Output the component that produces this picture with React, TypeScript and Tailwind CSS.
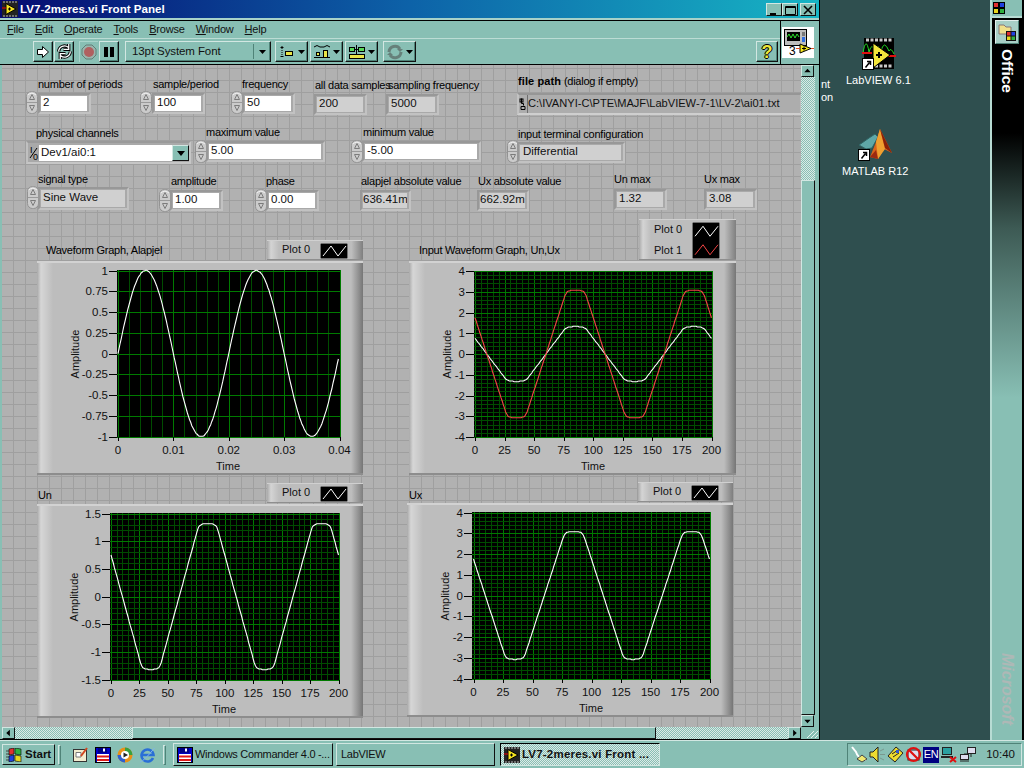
import React from "react";

type N = number;
const box = (x: N, y: N, w: N, h: N) => ({ left: x - 2, top: y - 64, width: w, height: h });

function Spin({ x, y, h = 23 }: { x: N; y: N; h?: N }) {
  return (
    <svg className="absolute" style={box(x, y, 12, h)} viewBox={`0 0 12 ${h}`}>
      <rect x="0.5" y="0.5" width="11" height={h - 1} rx="5" fill="#cbcbcb" stroke="#929292" />
      <path d="M1.5 4Q6 0.5 10 4" stroke="#efefef" fill="none" />
      <line x1="1" x2="11" y1={h / 2} y2={h / 2} stroke="#9a9a9a" />
      <path d={`M6 ${h / 2 - 8}L3.5 ${h / 2 - 3}H8.5Z`} fill="none" stroke="#7c7c7c" />
      <path d={`M6 ${h / 2 + 8}L3.5 ${h / 2 + 3}H8.5Z`} fill="none" stroke="#7c7c7c" />
    </svg>
  );
}

function Label({ x, y, children }: { x: N; y: N; children: React.ReactNode }) {
  return (
    <span className="absolute whitespace-nowrap text-[11px] leading-[12px] tracking-[-0.25px] text-black" style={{ left: x - 2, top: y - 71 }}>
      {children}
    </span>
  );
}

function Field({ x, y, w, h = 15, value, dim, px = 2 }: { x: N; y: N; w: N; h?: N; value: string; dim?: boolean; px?: N }) {
  return (
    <>
      <div className="absolute border-2 border-t-[#989898] border-l-[#989898] border-r-[#c2c2c2] border-b-[#c2c2c2] bg-[#a9a9a9]" style={box(x - 3, y - 3, w + 7, h + 6)} />
      <div
        className={`absolute flex items-center overflow-hidden whitespace-nowrap pb-[1px] text-[11.5px] text-[#111] ${dim ? "bg-[#d0d0d0]" : "bg-white"}`}
        style={{ ...box(x, y, w, h), paddingLeft: px }}
      >
        {value}
      </div>
    </>
  );
}

function Legend({ x, y, w, h, plots }: { x: N; y: N; w: N; h: N; plots: { name: string; color: string }[] }) {
  const rh = (h - 4) / plots.length;
  return (
    <div className="absolute border-t border-t-[#d0d0d0] border-b border-b-[#8e8e8e] bg-[linear-gradient(90deg,#a9a9a9_0,#d4d4d4_4px,#bdbdbd_12px,#bdbdbd_88%,#7f7f7f_100%)]" style={box(x, y, w, h)}>
      {plots.map((p, i) => (
        <span key={p.name} className="absolute whitespace-nowrap text-[11px] leading-[12px] text-[#111]" style={{ left: 15, top: rh * i + rh / 2 - 6 + i * 2 }}>
          {p.name}
        </span>
      ))}
      <svg className="absolute left-[53px] top-[2px]" width="28" height={h - 4}>
        <rect width="28" height={h - 4} fill="#000" stroke="#e0e0e0" />
        {plots.map((p, i) => {
          const m = rh * i + rh / 2;
          return <polyline key={p.name} points={`3,${m + 5} 11,${m - 5} 18,${m + 5} 26,${m - 5}`} fill="none" stroke={p.color} />;
        })}
      </svg>
    </div>
  );
}

function softClip(tri: N, limit: N) {
  const a = Math.abs(tri) / limit;
  const v = a < 0.9 ? a : 0.9 + 0.1 * (1 - Math.exp(-(a - 0.9) / 0.1));
  return Math.sign(tri) * v * limit;
}
function clipped(t: N, limit: N) {
  const p = ((t - 35) % 100 + 100) % 100;
  const tri = p < 50 ? -1 + p / 25 : 1 - (p - 50) / 25;
  return softClip(tri * limit * 1.42, limit);
}

type Series = { color: string; f: (i: N) => N };
type G = {
  frame: [N, N, N, N];
  plot: [N, N, N, N];
  xr: [N, N];
  yr: [N, N];
  xl: string[];
  yl: string[];
  xMinor: N;
  yMinor: N;
  ampX: N;
  ampY: N;
  timeX: N;
  timeY: N;
  series: Series[];
  end: N;
};

function Graph({ g }: { g: G }) {
  const [fx, fy, fw, fh] = g.frame;
  const [l, t, r, b] = g.plot;
  const xp = (i: N, n: N) => g.xr[0] + ((g.xr[1] - g.xr[0]) * i) / n;
  const yp = (i: N, n: N) => g.yr[0] + ((g.yr[1] - g.yr[0]) * i) / n;
  const xn = g.xl.length - 1;
  const yn = g.yl.length - 1;
  const lo = parseFloat(g.yl[0]);
  const hi = parseFloat(g.yl[yn]);
  return (
    <div
      className="absolute border-t-2 border-t-[#d2d2d2] border-b-2 border-b-[#8d8d8d] bg-[linear-gradient(90deg,#a9a9a9_0,#d6d6d6_4px,#cacaca_10px,#bdbdbd_16px,#bdbdbd_calc(100%-12px),#767676_100%)]"
      style={box(fx, fy, fw, fh)}
    >
      <svg className="absolute" style={{ left: 0, top: -2 }} width={fw} height={fh} viewBox={`${fx} ${fy} ${fw} ${fh}`}>
        <rect x={l} y={t} width={r - l} height={b - t} fill="#000" />
        <g shapeRendering="crispEdges">
          {Array.from({ length: xn * g.xMinor + 1 }, (_, i) => (
            <line key={i} x1={Math.round(xp(i, xn * g.xMinor)) + 0.5} x2={Math.round(xp(i, xn * g.xMinor)) + 0.5} y1={t} y2={b} stroke={i % g.xMinor ? "#004c00" : "#007a00"} />
          ))}
          {g.yMinor > 1 &&
            Array.from({ length: yn * g.yMinor + 1 }, (_, i) =>
              i % g.yMinor ? <line key={i} x1={l} x2={r} y1={Math.round(yp(i, yn * g.yMinor)) + 0.5} y2={Math.round(yp(i, yn * g.yMinor)) + 0.5} stroke="#004c00" /> : null,
            )}
          {g.yl.map((_, i) => (
            <line key={i} x1={l} x2={r} y1={Math.round(yp(i, yn)) + 0.5} y2={Math.round(yp(i, yn)) + 0.5} stroke="#007a00" />
          ))}
          {g.yl.map((_, i) => (
            <line key={"t" + i} x1={l - 8} x2={l} y1={Math.round(yp(i, yn)) + 0.5} y2={Math.round(yp(i, yn)) + 0.5} stroke="#000" />
          ))}
          {g.xl.map((_, i) => (
            <line key={"u" + i} x1={Math.round(xp(i, xn)) + 0.5} x2={Math.round(xp(i, xn)) + 0.5} y1={b} y2={b + 4} stroke="#000" />
          ))}
        </g>
        {g.series.map((s) => (
          <polyline
            key={s.color}
            fill="none"
            stroke={s.color}
            strokeWidth="1.1"
            points={Array.from({ length: 201 }, (_, i) => {
              const x = g.xr[0] + ((g.xr[1] - g.xr[0]) * i * g.end) / 200;
              const v = s.f(i * g.end);
              const y = g.yr[0] + ((g.yr[1] - g.yr[0]) * (v - hi)) / (lo - hi);
              return `${x.toFixed(1)},${(Math.round(y * 1.5) / 1.5).toFixed(1)}`;
            }).join(" ")}
          />
        ))}
        <g fontSize="11.5" fill="#111">
          {g.yl.map((s, i) => (
            <text key={s} x={l - 9} y={yp(yn - i, yn) + 4} textAnchor="end">
              {s}
            </text>
          ))}
          {g.xl.map((s, i) => (
            <text key={s} x={xp(i, xn)} y={b + 17} textAnchor="middle">
              {s}
            </text>
          ))}
          <text x={g.timeX} y={g.timeY + 4} textAnchor="middle" fontSize="11">
            Time
          </text>
          <text transform={`translate(${g.ampX + 4} ${g.ampY}) rotate(-90)`} textAnchor="middle" fontSize="11">
            Amplitude
          </text>
        </g>
      </svg>
    </div>
  );
}

const un: Series = { color: "#fff", f: (i) => clipped(i, 1.32) };
const ux: Series = { color: "#fff", f: (i) => clipped(i, 3.08) };
const amps = ["-4", "-3", "-2", "-1", "0", "1", "2", "3", "4"];
const times = ["0", "25", "50", "75", "100", "125", "150", "175", "200"];

const graphs: G[] = [
  {
    frame: [37, 260, 326, 214],
    plot: [117, 269, 340, 436],
    xr: [118, 339.5],
    yr: [269.5, 435.5],
    xl: ["0", "0.01", "0.02", "0.03", "0.04"],
    yl: ["-1", "-0.75", "-0.5", "-0.25", "0", "0.25", "0.5", "0.75", "1"],
    xMinor: 5,
    yMinor: 1,
    ampX: 75,
    ampY: 353,
    timeX: 228,
    timeY: 465,
    series: [{ color: "#fff", f: (i) => Math.sin((2 * Math.PI * i) / 100) }],
    end: 0.995,
  },
  {
    frame: [409, 260, 327, 214],
    plot: [474, 270, 712, 436],
    xr: [475, 711.5],
    yr: [270, 436],
    xl: times,
    yl: amps,
    xMinor: 5,
    yMinor: 5,
    ampX: 447,
    ampY: 353,
    timeX: 593,
    timeY: 465,
    series: [{ color: "#fff", f: un.f }, { color: "#f24545", f: ux.f }],
    end: 1,
  },
  {
    frame: [37, 503, 326, 214],
    plot: [110, 512, 339, 679],
    xr: [111, 338.5],
    yr: [512.5, 678.5],
    xl: times,
    yl: ["-1.5", "-1", "-0.5", "0", "0.5", "1", "1.5"],
    xMinor: 5,
    yMinor: 5,
    ampX: 74,
    ampY: 596,
    timeX: 224,
    timeY: 708,
    series: [un],
    end: 1,
  },
  {
    frame: [407, 502, 326, 214],
    plot: [472, 511, 710, 678],
    xr: [473.5, 709.5],
    yr: [511.5, 677.5],
    xl: times,
    yl: amps,
    xMinor: 5,
    yMinor: 5,
    ampX: 445,
    ampY: 595,
    timeX: 591,
    timeY: 707,
    series: [ux],
    end: 1,
  },
];

function ToolBtn({ w = 20, className = "", children }: { w?: N; className?: string; children?: React.ReactNode }) {
  return (
    <div
      className={`flex h-[21px] shrink-0 items-center justify-center border border-t-[#d2e7e2] border-l-[#d2e7e2] border-r-[#111] border-b-[#111] bg-[#88bfb4] shadow-[inset_-1px_-1px_0_#4f8378] ${className}`}
      style={{ width: w }}
    >
      {children}
    </div>
  );
}

const Caret = () => (
  <svg width="7" height="4" className="ml-[2px] shrink-0">
    <path d="M0 0H7L3.500 4Z" fill="#000" />
  </svg>
);

function LvIcon({ size = 16 }: { size?: N }) {
  return (
    <svg width={size} height={size} viewBox="0 0 16 16" className="shrink-0">
      <rect width="16" height="16" fill="#222" />
      <path d="M1 1h14M1 15h14" stroke="#bbb" strokeDasharray="2 1" />
      <path d="M4 2.500L14 8 4 13.500Z" fill="#f4e320" stroke="#000" />
      <path d="M0 7h4" stroke="#e00" />
      <path d="M6 8h3M7.500 6.500v3" stroke="#000" />
    </svg>
  );
}

function ScrollBtn({ dir, className = "" }: { dir: "up" | "down" | "left" | "right"; className?: string }) {
  const d = { up: "M2 7H9L5.500 3Z", down: "M2 4H9L5.500 8Z", left: "M7 2V9L3 5.500Z", right: "M4 2V9L8 5.500Z" }[dir];
  return (
    <div className={`flex h-[12px] w-[13px] shrink-0 items-center justify-center border border-t-[#d2e7e2] border-l-[#d2e7e2] border-r-[#111] border-b-[#111] bg-[#88bfb4] ${className}`}>
      <svg width="11" height="10" viewBox="0 0 11 11">
        <path d={d} fill="#000" />
      </svg>
    </div>
  );
}

const dither = "bg-[repeating-conic-gradient(#dce9e6_0_25%,#88bfb4_0_50%)] bg-[size:2px_2px]";

const Floppy = () => (
  <svg width="16" height="16" viewBox="0 0 16 16" className="shrink-0">
    <rect x="0.500" y="0.500" width="15" height="15" fill="#0000c8" stroke="#000" />
    <rect x="3" y="1" width="9" height="5" fill="#000088" />
    <rect x="8" y="1.500" width="2" height="3" fill="#fff" />
    <rect x="2" y="7" width="12" height="8" fill="#fff" />
    <rect x="2" y="8.500" width="12" height="2" fill="#e01818" />
    <rect x="2" y="12" width="12" height="2" fill="#e01818" />
  </svg>
);

const ShortcutArrow = ({ x, y }: { x: N; y: N }) => (
  <g transform={`translate(${x} ${y})`}>
    <rect width="11" height="11" fill="#fff" stroke="#000" />
    <path d="M3 9L7 4M4.500 3H8V6.500" stroke="#000" strokeWidth="1.500" fill="none" />
  </g>
);

function TaskBtn({ w, active, icon, children, ml }: { w: N; active?: boolean; icon?: React.ReactNode; children: React.ReactNode; ml: N }) {
  return (
    <div
      className={`flex h-[23px] shrink-0 items-center gap-[2px] overflow-hidden whitespace-nowrap border pl-[3px] text-[#111] ${
        active
          ? `border-t-black border-l-black border-r-[#d2e7e2] border-b-[#d2e7e2] text-[11.5px] font-bold tracking-[0.2px] ${dither}`
          : "border-t-[#d2e7e2] border-l-[#d2e7e2] border-r-[#111] border-b-[#111] text-[11px] tracking-[-0.3px]"
      }`}
      style={{ width: w, marginLeft: ml }}
    >
      {icon}
      <span>{children}</span>
    </div>
  );
}

const Grip = () => (
  <div className="mx-[3px] h-[20px] w-[3px] shrink-0 border border-t-[#d2e7e2] border-l-[#d2e7e2] border-r-[#4f8378] border-b-[#4f8378]" />
);

export default function App() {
  return (
    <div className="flex h-[768px] w-[1024px] flex-col overflow-hidden bg-[#88bfb4] font-['Liberation_Sans',Arial,sans-serif] text-[11px] text-black">
      <div className="flex h-[740px] shrink-0">
        {/* LabVIEW window */}
        <div className="flex h-full w-[820px] shrink-0 flex-col border-r border-r-black bg-[#88bfb4]">
          <div className="flex h-[18px] shrink-0 items-center bg-[linear-gradient(90deg,#050a70,#0d62a8_50%,#17b4c4)] pl-[2px] pr-[3px]">
            <LvIcon />
            <span className="ml-[2px] whitespace-nowrap text-[11.6px] font-bold text-white">LV7-2meres.vi Front Panel</span>
            <div className="ml-auto flex">
              {[
                <rect key="a" x="3" y="9" width="6" height="2" fill="#000" />,
                <path key="b" d="M2.500 2.500H12.500V10.500H2.500ZM2 3.500H13" fill="none" stroke="#000" />,
                <path key="c" d="M3 2L11 10M11 2L3 10" stroke="#000" strokeWidth="1.600" />,
              ].map((ic, i) => (
                <div key={i} className={`h-[13px] w-[16px] border border-t-[#d2e7e2] border-l-[#d2e7e2] border-r-[#111] border-b-[#111] bg-[#88bfb4] ${i === 2 ? "ml-[2px]" : ""}`}>
                  <svg width="14" height="11">{ic}</svg>
                </div>
              ))}
            </div>
          </div>
          <div className="h-[2px] shrink-0 bg-[#a7d2c9]" />
          <div className="h-px shrink-0 bg-black" />
          <div className="flex h-[43px] shrink-0">
            <div className="flex min-w-0 flex-1 flex-col">
              <div className="flex h-[17px] shrink-0 items-center gap-[11px] pl-[7px] text-[11px] tracking-[-0.2px] text-[#111]">
                {[
                  ["F", "ile"],
                  ["E", "dit"],
                  ["O", "perate"],
                  ["T", "ools"],
                  ["B", "rowse"],
                  ["W", "indow"],
                  ["H", "elp"],
                ].map(([a, b]) => (
                  <span key={a}>
                    <span className="underline">{a}</span>
                    {b}
                  </span>
                ))}
              </div>
              <div className="h-px shrink-0 bg-[#bcdcd5]" />
              <div className="flex flex-1 items-center pl-[33px] pr-[2px]">
                <ToolBtn>
                  <svg width="14" height="14" viewBox="0 0 14 14">
                    <path d="M1.500 4.500H6.500V1.500L12.500 7 6.500 12.500V9.500H1.500Z" fill="#fff" stroke="#000" />
                  </svg>
                </ToolBtn>
                <ToolBtn className="ml-px">
                  <svg width="17" height="17" viewBox="0 0 16 16">
                    <path d="M2.500 8A5.500 5.500 0 0 1 11.500 4M12 1V6H7" fill="none" stroke="#000" strokeWidth="3" />
                    <path d="M2.500 8A5.500 5.500 0 0 1 11.500 4M12 1V6H7" fill="none" stroke="#fff" strokeWidth="1.200" />
                    <path d="M13.500 8A5.500 5.500 0 0 1 4.500 12M4 15V10H9" fill="none" stroke="#000" strokeWidth="3" />
                    <path d="M13.500 8A5.500 5.500 0 0 1 4.500 12M4 15V10H9" fill="none" stroke="#fff" strokeWidth="1.200" />
                  </svg>
                </ToolBtn>
                <div className="ml-[5px] flex h-[21px] w-[19px] shrink-0 items-center justify-center bg-[#88bfb4] shadow-[inset_1px_1px_0_#a9d4cb]">
                  <svg width="16" height="16" viewBox="0 0 16 16">
                    <path d="M5 1H11L15 5V11L11 15H5L1 11V5Z" fill="#9ab5ad" stroke="#5f7f78" />
                    <circle cx="8" cy="8" r="5" fill="#b06060" />
                  </svg>
                </div>
                <ToolBtn className="ml-px">
                  <svg width="12" height="12">
                    <rect x="1" y="1" width="4" height="10" fill="#000" />
                    <rect x="7" y="1" width="4" height="10" fill="#000" />
                  </svg>
                </ToolBtn>
                <ToolBtn w={146} className="ml-[6px] !justify-start pl-[6px]">
                  <span className="whitespace-nowrap text-[11.5px] tracking-[-0.1px] text-[#111]">13pt System Font</span>
                  <span className="ml-auto mr-[2px] flex h-[15px] items-center border-l border-l-[#4f8378] pl-[3px] pr-[2px]">
                    <Caret />
                  </span>
                </ToolBtn>
                <ToolBtn w={33} className="ml-[4px]">
                  <svg width="18" height="16" viewBox="0 0 18 16">
                    <path d="M2.500 3.500h3M4 2v3M2.500 12.500h3" stroke="#000" />
                    <rect x="7.500" y="7.500" width="7" height="4" fill="#e9e648" stroke="#000" />
                    <path d="M4 6v5" stroke="#000" strokeDasharray="1 1" />
                  </svg>
                  <Caret />
                </ToolBtn>
                <ToolBtn w={33} className="ml-[2px]">
                  <svg width="18" height="16" viewBox="0 0 18 16">
                    <path d="M1 3Q4 0 7 3H11Q14 0 17 3" stroke="#000" fill="none" />
                    <rect x="3.500" y="8.500" width="3" height="3" fill="#e9e648" stroke="#000" />
                    <rect x="10.500" y="6.500" width="4" height="7" fill="#e9e648" stroke="#000" />
                    <path d="M1 13.500H17" stroke="#000" />
                  </svg>
                  <Caret />
                </ToolBtn>
                <ToolBtn w={33} className="ml-[2px]">
                  <svg width="18" height="16" viewBox="0 0 18 16">
                    <rect x="1.500" y="3.500" width="5" height="4" fill="#58d858" stroke="#000" />
                    <rect x="10.500" y="3.500" width="6" height="4" fill="#58d858" stroke="#000" />
                    <rect x="1.500" y="10.500" width="15" height="4" fill="#e9e648" stroke="#000" />
                    <path d="M8.500 1V10M6 5.500H11" stroke="#000" />
                  </svg>
                  <Caret />
                </ToolBtn>
                <ToolBtn w={33} className="ml-[5px]">
                  <svg width="18" height="16" viewBox="0 0 18 16">
                    <path d="M3 8A6 6 0 0 1 14 5M15 8A6 6 0 0 1 4 11" stroke="#66807a" strokeWidth="3" fill="none" />
                    <path d="M11 5H17L14 8ZM1 11H7L4 8Z" fill="#66807a" />
                  </svg>
                  <Caret />
                </ToolBtn>
                <ToolBtn w={22} className="ml-auto">
                  <span className="text-[18px] font-bold leading-[18px] text-[#eee93a] [text-shadow:1px_0_0_#000,-1px_0_0_#000,0_1px_0_#000,0_-1px_0_#000]">?</span>
                </ToolBtn>
              </div>
            </div>
            <div className="flex w-[39px] shrink-0 border-l border-l-black pl-[1px] pt-[6px]">
              <div className="relative h-[31px] w-[32px] bg-white">
                <svg width="32" height="31" viewBox="0 0 32 31">
                  <rect x="2.500" y="2.500" width="22" height="16" fill="#bdbdbd" stroke="#000" />
                  <rect x="5" y="5" width="13" height="9" fill="#000" />
                  <path d="M5 10L7 7 9 11 11 7 13 11 15 7 17 10" stroke="#2ce02c" fill="none" />
                  <rect x="20" y="5" width="3" height="4" fill="#777" />
                  <rect x="20" y="10" width="3" height="5" fill="#2f6de0" />
                  <path d="M18 17L29 21.500 18 26Z" fill="#f6e61c" stroke="#000" />
                  <path d="M14 21.500H18M29 21.500H32" stroke="#e04a20" />
                  <path d="M20 21.500h4M22 19.500v4" stroke="#000" />
                </svg>
                <span className="absolute left-[7px] top-[18px] text-[12px] leading-[13px] text-black">3</span>
              </div>
            </div>
          </div>
          <div className="h-px shrink-0 bg-black" />
          {/* Panel + vertical scrollbar */}
          <div className="flex min-h-0 flex-1">
            <div className="w-[2px] shrink-0" />
            <div className="relative min-w-0 flex-1 overflow-hidden bg-[#b1b1b1] bg-[linear-gradient(#9f9f9f_1px,transparent_1px),linear-gradient(90deg,#9f9f9f_1px,transparent_1px)] bg-[position:11px_3px] bg-[size:12px_12px]">
              <Label x={38} y={84}>number of periods</Label>
              <Spin x={26} y={90} />
              <Field x={41} y={95} w={46} value="2" />
              <Label x={153} y={84}>sample/period</Label>
              <Spin x={140} y={90} />
              <Field x={155} y={95} w={46} value="100" />
              <Label x={242} y={84}>frequency</Label>
              <Spin x={231} y={90} />
              <Field x={245} y={95} w={46} value="50" />
              <Label x={315} y={85}>all data samples</Label>
              <Field x={317} y={96} w={46} value="200" dim />
              <Label x={388} y={85}>sampling frequency</Label>
              <Field x={389} y={96} w={46} value="5000" dim />
              <Label x={518} y={81}>
                <b className="tracking-[0.1px]">file path</b> (dialog if empty)
              </Label>
              <div className="absolute flex items-center border-2 border-t-[#969696] border-l-[#c2c2c2] border-r-[#bdbdbd] border-b-[#cfcfcf] bg-[#adadad]" style={box(517, 92, 285, 22)}>
                <svg width="7" height="14" className="shrink-0" viewBox="0 0 7 14">
                  <path d="M2.500 1.500v5h2v2M2 9.500H6V12.500H2Z" stroke="#000" fill="none" />
                  <rect x="1" y="2" width="3" height="3" fill="none" stroke="#000" />
                </svg>
                <span className="ml-[1px] flex h-[18px] flex-1 items-center whitespace-nowrap border-l border-l-[#6e6e6e] pb-[1px] text-[11.1px] text-[#111]">C:\IVANYI-C\PTE\MAJF\LabVIEW-7-1\LV-2\ai01.txt</span>
              </div>

              <Label x={36} y={133}>physical channels</Label>
              <div className="absolute border-2 border-t-[#9a9a9a] border-l-[#c0c0c0] border-r-[#c6c6c6] border-b-[#c6c6c6] bg-[#a9a9a9]" style={box(26, 140, 165, 23)} />
              <span className="absolute text-[9px] leading-[9px]" style={{ left: 28, top: 81 }}>
                I
              </span>
              <span className="absolute text-[9px] leading-[9px]" style={{ left: 31, top: 88 }}>
                0
              </span>
              <svg className="absolute" style={box(29, 146, 10, 12)} viewBox="0 0 10 12">
                <path d="M1 11L8 1" stroke="#000" />
              </svg>
              <div className="absolute flex items-center whitespace-nowrap bg-white pb-[1px] pl-[2px] text-[11.5px] text-[#111]" style={box(39, 144, 133, 16)}>
                Dev1/ai0:1
              </div>
              <div className="absolute flex items-center justify-center border border-t-[#d2e7e2] border-l-[#d2e7e2] border-r-[#111] border-b-[#111] bg-[#88bfb4]" style={box(172, 144, 17, 16)}>
                <svg width="8" height="5">
                  <path d="M0 0H8L4 5Z" fill="#000" />
                </svg>
              </div>
              <Label x={206} y={132}>maximum value</Label>
              <Spin x={195} y={139} />
              <Field x={209} y={143} w={112} value="5.00" />
              <Label x={363} y={132}>minimum value</Label>
              <Spin x={351} y={139} />
              <Field x={365} y={143} w={112} value="-5.00" />
              <Label x={518} y={134}>input terminal configuration</Label>
              <Spin x={507} y={139} />
              <Field x={520} y={144} w={101} value="Differential" dim px={3} />

              <Label x={38} y={179}>signal type</Label>
              <Spin x={27} y={185} />
              <Field x={41} y={189} w={84} h={17} value="Sine Wave" dim />
              <Label x={171} y={181}>amplitude</Label>
              <Spin x={159} y={188} />
              <Field x={173} y={192} w={46} value="1.00" />
              <Label x={266} y={181}>phase</Label>
              <Spin x={255} y={188} />
              <Field x={269} y={192} w={46} value="0.00" />
              <Label x={361} y={181}>alapjel absolute value</Label>
              <Field x={363} y={192} w={44} value="636.41m" dim px={0} />
              <Label x={478} y={181}>Ux absolute value</Label>
              <Field x={480} y={192} w={45} value="662.92m" dim px={0} />
              <Label x={614} y={179}>Un max</Label>
              <Field x={617} y={191} w={46} value="1.32" dim />
              <Label x={704} y={179}>Ux max</Label>
              <Field x={707} y={191} w={46} value="3.08" dim />

              <Label x={46} y={250}>Waveform Graph, Alapjel</Label>
              <Label x={419} y={250}>Input Waveform Graph, Un,Ux</Label>
              <Label x={38} y={495}>Un</Label>
              <Label x={409} y={495}>Ux</Label>
              {graphs.map((g) => (
                <Graph key={g.frame.join()} g={g} />
              ))}
              <Legend x={267} y={239} w={96} h={20} plots={[{ name: "Plot 0", color: "#fff" }]} />
              <Legend x={639} y={218} w={97} h={41} plots={[{ name: "Plot 0", color: "#fff" }, { name: "Plot 1", color: "#f24545" }]} />
              <Legend x={267} y={482} w={96} h={20} plots={[{ name: "Plot 0", color: "#fff" }]} />
              <Legend x={638} y={481} w={95} h={20} plots={[{ name: "Plot 0", color: "#fff" }]} />
            </div>
            <div className="flex w-[14px] shrink-0 flex-col">
              <ScrollBtn dir="up" />
              <div className={`h-[103px] shrink-0 ${dither}`} />
              <div className="min-h-0 flex-1 border border-t-[#d2e7e2] border-l-[#d2e7e2] border-r-[#111] border-b-[#111] bg-[#88bfb4]" />
              <ScrollBtn dir="down" />
            </div>
            <div className="w-[4px] shrink-0" />
          </div>
          {/* Horizontal scrollbar */}
          <div className="flex h-[12px] shrink-0 pl-[2px]">
            <ScrollBtn dir="left" />
            <div className={`w-[117px] shrink-0 ${dither}`} />
            <div className="w-[524px] shrink-0 border border-t-[#d2e7e2] border-l-[#d2e7e2] border-r-[#111] border-b-[#111] bg-[#88bfb4]" />
            <div className={`min-w-0 flex-1 ${dither}`} />
            <ScrollBtn dir="right" />
            <div className="relative w-[18px] shrink-0">
              <svg className="absolute inset-0" width="18" height="12">
                <path d="M14 11L17 8M10 11L17 4M6 11L13 4" stroke="#e6f2ef" />
              </svg>
            </div>
          </div>
          <div className="h-[1px] shrink-0 bg-black" />
        </div>

        {/* Desktop */}
        <div className="relative min-w-0 flex-1 overflow-hidden bg-[#2f4f4f] text-white">
          <span className="absolute left-[1px] top-[78px] whitespace-nowrap text-[11px] leading-[13px]">
            nt
            <br />
            on
          </span>
          <svg className="absolute left-[42px] top-[37px]" width="34" height="34" viewBox="0 0 34 34">
            <rect x="2" y="1" width="30" height="31" fill="#000" />
            <path d="M4 3h27M4 29h27" stroke="#c9c9c9" strokeWidth="3" strokeDasharray="3 1.500" />
            <path d="M1 16Q4 -2 7 15Q10 4 13 15Q16 4 19 14Q22 2 27 14Q29 10 32 17" stroke="#22d922" fill="none" />
            <path d="M0 16H10M26 19H34" stroke="#e01010" strokeWidth="2" />
            <path d="M11 6L28 18 11 31Z" fill="#f4e63c" stroke="#000" />
            <path d="M14 18h6M17 15v6" stroke="#000" strokeWidth="2" />
            <ShortcutArrow x={0.5} y={21.5} />
          </svg>
          <span className="absolute left-[26px] top-[74px] whitespace-nowrap text-[11px] leading-[13px]">LabVIEW 6.1</span>
          <svg className="absolute left-[38px] top-[128px]" width="36" height="36" viewBox="0 0 36 36">
            <path d="M1 17L11 10 17 6 20 9 14 20 8 21Z" fill="#5fa8a8" stroke="#2f6464" />
            <path d="M22 1L34 25 26 21 20 31 12 29 18 14Z" fill="#d8641c" />
            <path d="M22 1L27 21 20 31 18 14Z" fill="#f0a030" />
            <path d="M12 29L18 22 20 31Z" fill="#9c2a10" />
            <path d="M22 1L34 25 27 20Z" fill="#8a2008" />
            <ShortcutArrow x={0.5} y={21.5} />
          </svg>
          <span className="absolute left-[22px] top-[165px] whitespace-nowrap text-[11px] leading-[13px]">MATLAB R12</span>
        </div>

        {/* Office bar */}
        <div className="flex h-full w-[34px] shrink-0 flex-col border-l-2 border-l-[#b8dcd4] border-r-2 border-r-black bg-[#88bfb4]">
          <div className="flex h-[16px] shrink-0 items-center pl-[1px]">
            <svg width="12" height="12" viewBox="0 0 12 12">
              <rect width="12" height="12" fill="#000" />
              <rect x="1" y="1" width="4" height="4" fill="#e03030" />
              <rect x="7" y="1" width="4" height="4" fill="#2040e0" />
              <rect x="1" y="7" width="4" height="4" fill="#e8d820" />
              <rect x="7" y="7" width="4" height="4" fill="#30b040" />
            </svg>
          </div>
          <div className="h-[2px] shrink-0 bg-[#b8dcd4]" />
          <div className="flex min-h-0 flex-1 flex-col items-center bg-[linear-gradient(#000_0,#000_115px,#3d5a54_210px,#88bfb4_380px)] pt-[2px]">
            <div className="flex h-[24px] w-[24px] shrink-0 items-center justify-center border border-t-[#e4f0ed] border-l-[#e4f0ed] border-r-[#4f8378] border-b-[#4f8378] bg-[#a8cfc6]">
              <svg width="20" height="20" viewBox="0 0 20 20">
                <path d="M2 3H7L9 5H14V12H2Z" fill="#f0e08a" stroke="#877" />
                <rect x="9" y="9" width="10" height="10" fill="#111" />
                <rect x="10" y="10" width="3.500" height="3.500" fill="#e03030" />
                <rect x="14.500" y="10" width="3.500" height="3.500" fill="#2040e0" />
                <rect x="10" y="14.500" width="3.500" height="3.500" fill="#e8d820" />
                <rect x="14.500" y="14.500" width="3.500" height="3.500" fill="#30b040" />
              </svg>
            </div>
            <span className="mt-[5px] whitespace-nowrap text-[15.5px] font-bold leading-[16px] text-white [writing-mode:vertical-rl]">Office</span>
            <span className="mt-auto mb-[15px] whitespace-nowrap text-[16px] font-bold italic leading-[16px] text-[#aeb8b6] [writing-mode:vertical-rl]">Microsoft</span>
          </div>
        </div>
      </div>

      {/* Taskbar */}
      <div className="flex h-[28px] shrink-0 items-center border-t border-t-[#d2e7e2] pr-[2px]">
        <div className="ml-[2px] flex h-[21px] w-[53px] shrink-0 items-center gap-[3px] border border-t-[#d2e7e2] border-l-[#d2e7e2] border-r-[#111] border-b-[#111] pl-[3px] text-[11.5px] font-bold text-[#111]">
          <svg width="16" height="14" viewBox="0 0 16 14" className="shrink-0">
            <path d="M0 3h3M0 6h3M0 9h3M0 12h3" stroke="#444" />
            <path d="M3 1L8 0V6L3 7Z" fill="#e03030" stroke="#000" strokeWidth="0.600" />
            <path d="M9 0L15 1V7L9 6Z" fill="#30b040" stroke="#000" strokeWidth="0.600" />
            <path d="M3 8L8 7V13L3 14Z" fill="#2040e0" stroke="#000" strokeWidth="0.600" />
            <path d="M9 7L15 8V14L9 13Z" fill="#e8d820" stroke="#000" strokeWidth="0.600" />
          </svg>
          Start
        </div>
        <Grip />
        <div className="ml-[4px] flex w-[92px] shrink-0 items-center justify-between pl-[4px] pr-[4px]">
          <svg width="17" height="17" viewBox="0 0 17 17" className="shrink-0">
            <rect x="1.500" y="3.500" width="13" height="12" fill="#f2edd0" stroke="#333" />
            <path d="M4 6.500H9V11H4Z" fill="#fff" stroke="#777" />
            <path d="M9 10L15 2" stroke="#d04820" strokeWidth="2" />
          </svg>
          <Floppy />
          <svg width="16" height="16" viewBox="0 0 16 16" className="shrink-0">
            <circle cx="8" cy="8" r="7.500" fill="#e89018" />
            <path d="M8 .5A7.500 7.500 0 0 1 15.500 8H8Z" fill="#38a040" />
            <path d="M8 8H.5A7.500 7.500 0 0 0 8 15.500Z" fill="#2f5fd0" />
            <circle cx="8" cy="8" r="4" fill="#fff" />
            <path d="M6.500 5.500L11 8 6.500 10.500Z" fill="#222" />
          </svg>
          <svg width="17" height="17" viewBox="0 0 17 17" className="shrink-0">
            <path d="M14 12A6 6 0 1 1 14.500 9H3" fill="none" stroke="#2a6fd6" strokeWidth="2.600" />
            <path d="M1 16Q5 15 15.500 2" stroke="#7eb2ee" fill="none" />
          </svg>
        </div>
        <Grip />
        <TaskBtn w={160} ml={4} icon={<Floppy />}>Windows Commander 4.0 -...</TaskBtn>
        <TaskBtn w={159} ml={3}>
          <span className="ml-[1px]">LabVIEW</span>
        </TaskBtn>
        <TaskBtn w={160} ml={5} active icon={<LvIcon />}>LV7-2meres.vi Front ...</TaskBtn>
        <div className="ml-auto flex h-[23px] w-[175px] shrink-0 items-center border border-t-[#4f8378] border-l-[#4f8378] border-r-[#d2e7e2] border-b-[#d2e7e2] pl-[3px] text-[11.5px] text-[#111]">
          <svg width="17" height="17" viewBox="0 0 17 17" className="shrink-0">
            <path d="M1 1L5 6Q7 12 12 13L15 14" stroke="#fff" strokeWidth="2" fill="none" />
            <path d="M6 13L11 9L16 13L11 16Z" fill="#f0e870" stroke="#444" />
          </svg>
          <svg width="17" height="17" viewBox="0 0 17 17" className="ml-[1px] shrink-0">
            <path d="M1 6H4L9 1V16L4 11H1Z" fill="#eedc30" stroke="#222" />
            <path d="M11 5L15 3M11 8.500H16M11 12L15 14" stroke="#7a9990" />
          </svg>
          <svg width="17" height="17" viewBox="0 0 17 17" className="ml-[1px] shrink-0">
            <path d="M9 1L16 7L8 16L1 10Z" fill="#eedc30" stroke="#222" />
            <path d="M5 8L11 4M6 11L12 7" stroke="#222" />
            <rect x="9" y="4" width="3" height="3" fill="#3058d0" />
          </svg>
          <svg width="17" height="17" viewBox="0 0 17 17" className="ml-[1px] shrink-0">
            <rect x="3" y="4" width="11" height="10" fill="#dde" stroke="#222" />
            <circle cx="8.500" cy="8.500" r="6.500" fill="none" stroke="#e01010" strokeWidth="2.200" />
            <path d="M4 4L13 13" stroke="#e01010" strokeWidth="2.200" />
          </svg>
          <span className="ml-[1px] flex h-[16px] w-[16px] shrink-0 items-center justify-center bg-[#000080] text-[11px] tracking-[-0.5px] text-white">EN</span>
          <svg width="18" height="17" viewBox="0 0 18 17" className="ml-[1px] shrink-0">
            <rect x="2.500" y="1.500" width="9" height="7" fill="#2aa0a0" stroke="#222" />
            <path d="M1 11H13" stroke="#222" strokeWidth="2" />
            <path d="M10 11L16 16M16 11L10 16" stroke="#e01010" strokeWidth="2" />
          </svg>
          <svg width="18" height="17" viewBox="0 0 18 17" className="ml-[1px] shrink-0">
            <rect x="1.500" y="8.500" width="8" height="5" fill="#dde" stroke="#222" />
            <rect x="8.500" y="1.500" width="8" height="6" fill="#dde" stroke="#222" />
            <path d="M1 15H10M9 8L5 8M12 8V11" stroke="#222" />
          </svg>
          <span className="ml-auto mr-[6px]">10:40</span>
        </div>
      </div>
    </div>
  );
}
